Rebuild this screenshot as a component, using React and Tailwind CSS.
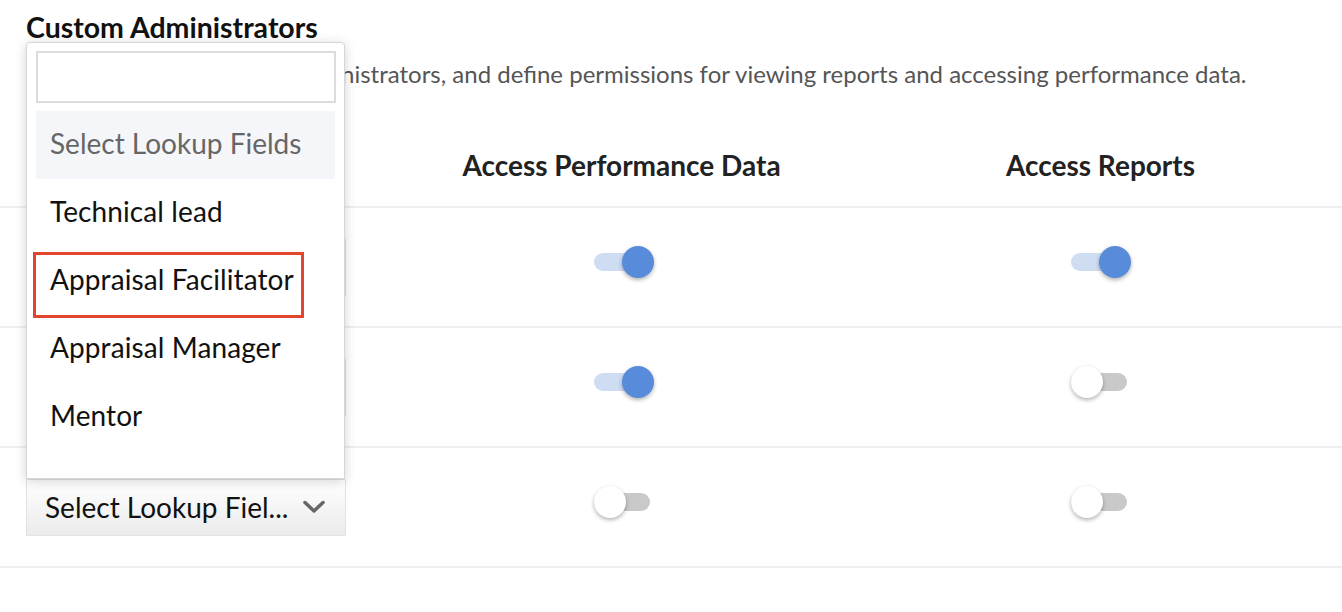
import React from 'react';

const rows = [
  { perf: true, reports: true },
  { perf: true, reports: false },
  { perf: false, reports: false },
];

const lookupOptions = ['Technical lead', 'Appraisal Facilitator', 'Appraisal Manager', 'Mentor'];

const Toggle = ({ on }) => (
  <div className="relative w-[60px] h-8">
    <div className={`absolute left-0 top-[7px] w-[56px] h-[18px] rounded-full ${on ? 'bg-[#cfddf3]' : 'bg-[#c9c9c9]'}`} />
    <div
      className={`absolute top-0 w-8 h-8 rounded-full shadow-[0_2px_4px_rgba(0,0,0,0.3)] ${
        on ? 'left-[28px] bg-[#588bd9]' : 'left-0 bg-white'
      }`}
    />
  </div>
);

const Chevron = () => (
  <svg width="22" height="14" viewBox="0 0 22 14" fill="none">
    <path d="M2 2.5 L11 11 L20 2.5" stroke="#666666" strokeWidth="3.5" strokeLinecap="round" strokeLinejoin="round" />
  </svg>
);

const SelectButton = () => (
  <div className="w-[320px] h-[57px] flex items-center justify-between pl-[18px] pr-[20px] border border-[#e2e2e2] bg-gradient-to-b from-white to-[#ebebeb] text-[28px] text-[#111] leading-[34px]">
    <span>Select Lookup Fiel...</span>
    <Chevron />
  </div>
);

const LookupMenu = () => (
  <div className="absolute left-0 bottom-full w-[319px] h-[437px] bg-white border border-[#d6d6d6] rounded-t-[4px] shadow-[0_2px_12px_rgba(0,0,0,0.18)] px-[9px] pt-[8px] z-10">
    <div className="w-[300px] h-[52px] border-2 border-[#dcdcdc] bg-white" />
    <div className="mt-[8px] relative">
      <div className="h-[68px] flex items-center pl-[14px] pb-[4px] bg-[#f5f6fa] text-[#666] text-[28px] leading-[34px]">
        Select Lookup Fields
      </div>
      {lookupOptions.map((opt) => (
        <div key={opt} className="h-[68px] flex items-center pl-[14px] pb-[4px] text-[#111] text-[28px] leading-[34px] tracking-[0.1px]">
          {opt}
        </div>
      ))}
      {/* highlight box around Appraisal Facilitator */}
      <div className="absolute left-[-3px] top-[141px] w-[271px] h-[66px] border-[3px] border-[#e5442f]" />
    </div>
  </div>
);

const App = () => {
  return (
    <div className="w-[1342px] h-[612px] bg-white overflow-hidden font-['Lato',sans-serif]">
      <div className="px-[26px] pt-[10px]">
        <h1 className="text-[28.5px] leading-[34px] font-bold text-[#111]">Custom Administrators</h1>
        <p className="mt-[14px] text-[24px] leading-[32px] text-[#555] whitespace-nowrap">
          Assign people as custom administrators, and define permissions for viewing reports and accessing performance data.
        </p>
      </div>

      <div className="mt-[36px]">
        <div className="grid grid-cols-[382px_479px_479px] h-[82px] border-b-2 border-[#eeeeee] items-center">
          <div />
          <div className="text-center text-[28px] leading-[34px] font-bold text-[#222] pb-[2px]">Access Performance Data</div>
          <div className="text-center text-[28px] leading-[34px] font-bold text-[#222] pb-[2px]">Access Reports</div>
        </div>

        {rows.map((row, i) => (
          <div key={i} className="grid grid-cols-[382px_479px_479px] h-[120px] border-b-2 border-[#eeeeee] items-center">
            <div className="pl-[26px] relative">
              <div className="relative w-[320px]">
                {i === rows.length - 1 && <LookupMenu />}
                <SelectButton />
              </div>
            </div>
            <div className="flex justify-center pl-[5px] pb-[10px]">
              <Toggle on={row.perf} />
            </div>
            <div className="flex justify-center pl-[1px] pb-[10px]">
              <Toggle on={row.reports} />
            </div>
          </div>
        ))}
      </div>
    </div>
  );
};

export default App;
